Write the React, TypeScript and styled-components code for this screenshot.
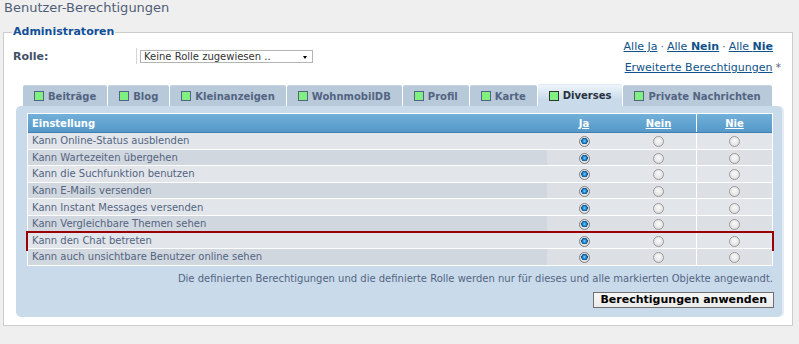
import React from "react";
import styled, { createGlobalStyle } from "styled-components";

const Global = createGlobalStyle`
  html, body { margin: 0; padding: 0; }
  body {
    background: #efefef;
    font-family: "DejaVu Sans", Verdana, sans-serif;
    color: #536482;
  }
`;

const Page = styled.div`
  padding: 0 6px 0 3px;
`;

const Title = styled.h1`
  margin: 0;
  padding-left: 1px;
  font-size: 13px;
  line-height: 15px;
  font-weight: normal;
  color: #4f5e77;
  height: 25px;
`;

const Fieldset = styled.fieldset`
  margin: 0;
  border: 1px solid #cccccc;
  background: #ffffff;
  padding: 1px 8px 8px 8px;
  min-width: 0;
`;

const Legend = styled.legend`
  padding: 0 1px;
  font-size: 11px;
  line-height: 14px;
  font-weight: bold;
  color: #115098;
`;

const TopRow = styled.div`
  display: flex;
  justify-content: space-between;
  align-items: flex-start;
  padding-left: 1px;
`;

const RoleRow = styled.div`
  display: flex;
  align-items: center;
  margin-top: 8px;
  height: 16px;
`;

const RoleLabel = styled.label`
  width: 123px;
  font-size: 11px;
  font-weight: bold;
  color: #425067;
`;

const RoleField = styled.div`
  display: flex;
  align-items: center;
  height: 16px;
  border-left: 1px solid #d5d5d5;
  padding-left: 3px;
`;

const Select = styled.div`
  position: relative;
  width: 168px;
  height: 11px;
  border: 1px solid #b4b4b4;
  background: #ffffff;
  font-size: 10px;
  line-height: 11px;
  color: #333333;
  padding-left: 3px;
  box-sizing: content-box;
  white-space: nowrap;
  overflow: hidden;
`;

const SelectArrow = styled.span`
  position: absolute;
  right: 5px;
  top: 5px;
  width: 0;
  height: 0;
  border-left: 2px solid transparent;
  border-right: 2px solid transparent;
  border-top: 3px solid #000;
`;

const Links = styled.div`
  padding-right: 11px;
  text-align: right;
  font-size: 11px;
  line-height: 14px;
`;

const LinkLine = styled.div<{ $gap?: number }>`
  margin-top: ${(p) => p.$gap ?? 0}px;
  white-space: nowrap;
`;

const A = styled.a`
  color: #105289;
  text-decoration: underline;
`;

const Strong = styled.b`
  font-weight: bold;
`;

const Dot = styled.span`
  color: #536482;
  margin: 0 3px;
`;

const Star = styled.span`
  color: #536482;
  margin-right: -8px;
  padding-left: 3px;
`;

const Tabs = styled.div`
  display: flex;
  align-items: flex-end;
  gap: 1px;
  margin-top: 9px;
  padding-left: 11px;
`;

const Tab = styled.div<{ $active?: boolean }>`
  display: flex;
  align-items: center;
  gap: 4px;
  height: ${(p) => (p.$active ? 22 : 21)}px;
  padding: 0 11px;
  box-sizing: border-box;
  border-radius: 2px 2px 0 0;
  background: ${(p) =>
    p.$active ? "linear-gradient(#eef4fa, #c9dbeb 70%)" : "#b8c9d9"};
  border-top: 1px solid ${(p) => (p.$active ? "#dfe9f3" : "#c6d4e1")};
  font-size: 10px;
  font-weight: bold;
  color: ${(p) => (p.$active ? "#28313f" : "#536482")};
  white-space: nowrap;
`;

const TabBox = styled.span<{ $active?: boolean }>`
  width: 8px;
  height: 8px;
  background: #80f080;
  border: 1px solid ${(p) => (p.$active ? "#333" : "#536482")};
`;

const Panel = styled.div`
  margin: 0 2px 0 4px;
  background: #c9dbeb;
  border-radius: 5px;
  padding: 7px 9px 9px 11px;
  box-shadow: 2px 0 0 #e3ebf3;
`;

const Table = styled.div`
  border: 1px solid #ffffff;
  border-bottom: 0;
  background: #ffffff;
`;

const cols = "519px 74px 75px 1fr";

const HeadRow = styled.div`
  display: grid;
  grid-template-columns: ${cols};
  height: 18px;
  background: linear-gradient(#71b0d9, #5598c8);
  border-bottom: 1px solid #3e7fb3;
  font-size: 10px;
  font-weight: bold;
  color: #ffffff;
`;

const HeadCell = styled.div<{ $center?: boolean; $sep?: boolean }>`
  display: flex;
  align-items: center;
  justify-content: ${(p) => (p.$center ? "center" : "flex-start")};
  padding-left: ${(p) => (p.$center ? 0 : 4)}px;
  border-left: ${(p) => (p.$sep ? "1px solid #ffffff" : "0")};
`;

const HeadLink = styled.span`
  text-decoration: underline;
`;

const Row = styled.div<{ $mark?: boolean }>`
  display: grid;
  grid-template-columns: ${cols};
  height: 15.6px;
  border-bottom: 1px solid #ffffff;
  font-size: 10px;
  color: #536482;
  outline: ${(p) => (p.$mark ? "2px solid #9a0000" : "none")};
  position: relative;
`;

const LabelCell = styled.div<{ $alt?: boolean }>`
  display: flex;
  align-items: center;
  padding-left: 4px;
  background: ${(p) => (p.$alt ? "#d1d7de" : "#e2e6ea")};
  white-space: nowrap;
`;

const RadioCell = styled.div<{ $alt?: boolean; $sep?: boolean }>`
  display: flex;
  align-items: center;
  justify-content: center;
  background: ${(p) => (p.$alt ? "#dcdfe3" : "#e2e6ea")};
  border-left: ${(p) => (p.$sep ? "1px solid #ffffff" : "0")};
`;

const Radio = styled.input.attrs({ type: "radio" })`
  appearance: none;
  -webkit-appearance: none;
  margin: 2px 0 0 0;
  width: 11px;
  height: 11px;
  border-radius: 50%;
  border: 1px solid #9a9a9a;
  box-sizing: border-box;
  background: radial-gradient(circle at 50% 40%, #fafafa 0%, #e6e6e6 60%, #cfcfcf 100%);
  &:checked {
    border-color: #7d7d7d;
    background: radial-gradient(
      circle at 50% 45%,
      #7fd0ff 0%,
      #1c86cf 28%,
      #0d4d85 46%,
      #e9e9e9 52%,
      #cfcfcf 100%
    );
  }
`;

const Note = styled.p`
  margin: 6px 0 0 0;
  text-align: right;
  font-size: 10px;
  line-height: 14px;
  color: #536482;
`;

const Actions = styled.div`
  display: flex;
  justify-content: flex-end;
  margin: 6px -1px 0 0;
`;

const Button = styled.button`
  height: 16px;
  padding: 0 6px;
  border: 1px solid #6f6f6f;
  background: linear-gradient(#f7f7f7, #ebebeb);
  font-family: "DejaVu Sans", Verdana, sans-serif;
  font-size: 11px;
  line-height: 14px;
  font-weight: bold;
  color: #000000;
`;

const tabs = [
  "Beiträge",
  "Blog",
  "Kleinanzeigen",
  "WohnmobilDB",
  "Profil",
  "Karte",
  "Diverses",
  "Private Nachrichten",
];

const rows = [
  "Kann Online-Status ausblenden",
  "Kann Wartezeiten übergehen",
  "Kann die Suchfunktion benutzen",
  "Kann E-Mails versenden",
  "Kann Instant Messages versenden",
  "Kann Vergleichbare Themen sehen",
  "Kann den Chat betreten",
  "Kann auch unsichtbare Benutzer online sehen",
];

export default function App() {
  return (
    <>
      <Global />
      <Page>
        <Title>Benutzer-Berechtigungen</Title>
        <Fieldset>
          <Legend>Administratoren</Legend>
          <TopRow>
            <RoleRow>
              <RoleLabel>Rolle:</RoleLabel>
              <RoleField>
                <Select>
                  Keine Rolle zugewiesen ..
                  <SelectArrow />
                </Select>
              </RoleField>
            </RoleRow>
            <Links>
              <LinkLine>
                <A href="#">Alle Ja</A>
                <Dot>·</Dot>
                <A href="#">
                  Alle <Strong>Nein</Strong>
                </A>
                <Dot>·</Dot>
                <A href="#">
                  Alle <Strong>Nie</Strong>
                </A>
              </LinkLine>
              <LinkLine $gap={7}>
                <A href="#">Erweiterte Berechtigungen</A>
                <Star>*</Star>
              </LinkLine>
            </Links>
          </TopRow>
          <Tabs>
            {tabs.map((t) => (
              <Tab key={t} $active={t === "Diverses"}>
                <TabBox $active={t === "Diverses"} />
                {t}
              </Tab>
            ))}
          </Tabs>
          <Panel>
            <Table>
              <HeadRow>
                <HeadCell>Einstellung</HeadCell>
                <HeadCell $center>
                  <HeadLink>Ja</HeadLink>
                </HeadCell>
                <HeadCell $center>
                  <HeadLink>Nein</HeadLink>
                </HeadCell>
                <HeadCell $center $sep>
                  <HeadLink>Nie</HeadLink>
                </HeadCell>
              </HeadRow>
              {rows.map((r, i) => {
                const alt = i % 2 === 1;
                return (
                  <Row key={r} $mark={i === 6}>
                    <LabelCell $alt={alt}>{r}</LabelCell>
                    <RadioCell $alt={alt}>
                      <Radio name={`r${i}`} defaultChecked />
                    </RadioCell>
                    <RadioCell $alt={alt}>
                      <Radio name={`r${i}`} />
                    </RadioCell>
                    <RadioCell $alt={alt} $sep>
                      <Radio name={`r${i}`} />
                    </RadioCell>
                  </Row>
                );
              })}
            </Table>
            <Note>
              Die definierten Berechtigungen und die definierte Rolle werden nur
              für dieses und alle markierten Objekte angewandt.
            </Note>
            <Actions>
              <Button>Berechtigungen anwenden</Button>
            </Actions>
          </Panel>
        </Fieldset>
      </Page>
    </>
  );
}
